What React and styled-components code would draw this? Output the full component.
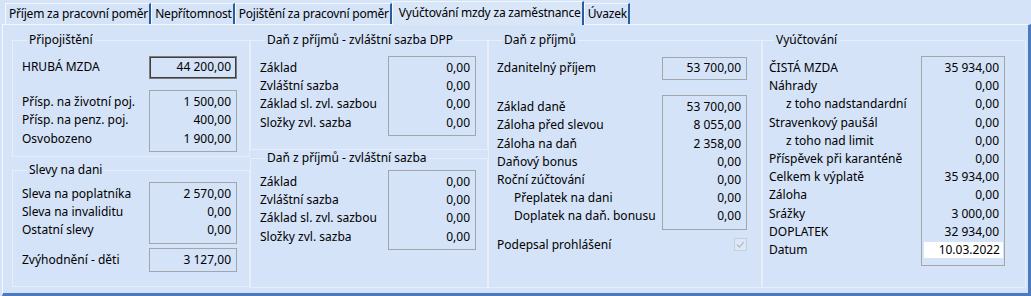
import React from 'react';
import styled, { createGlobalStyle } from 'styled-components';

const GlobalStyle = createGlobalStyle`
  body {
    margin: 0;
    background: #d4e3f8;
    font-family: "Noto Sans", "Open Sans", sans-serif;
    font-size: 12px;
    color: #000;
  }
`;

const Window = styled.div`
  width: 1031px;
  height: 296px;
  overflow: hidden;
  background: #d4e3f8;
`;

const TabStrip = styled.div`
  display: flex;
  align-items: flex-end;
  height: 24px;
  padding-left: 5px;
`;

const Tab = styled.div`
  height: ${(p) => (p.$active ? '24px' : '21px')};
  box-sizing: border-box;
  padding: 0 1px 0 ${(p) => (p.$active ? '6px' : '3px')};
  line-height: ${(p) => (p.$active ? '22px' : '19px')};
  letter-spacing: -0.2px;
  white-space: nowrap;
  border-top: 1px solid #f4f8fd;
  border-left: 1px solid #f4f8fd;
  border-right: 2px solid #2b5c9e;
  background: ${(p) => (p.$active ? '#d9e6f8' : '#d4e3f8')};
  margin-bottom: ${(p) => (p.$active ? '-1px' : '0')};
  position: relative;
  z-index: ${(p) => (p.$active ? 1 : 0)};
`;

const Panel = styled.div`
  margin-left: 2px;
  height: 272px;
  box-sizing: border-box;
  border-top: 1px solid #f4f8fd;
  border-left: 1px solid #f4f8fd;
  border-right: 3px solid #4a7bc2;
  border-bottom: 3px solid #4a7bc2;
  padding: 7px 2px 0 9px;
  display: grid;
  grid-template-columns: 238px 238px 274px 264px;
`;

const Column = styled.div`
  display: flex;
  flex-direction: column;
  gap: ${(p) => p.$gap || 0}px;
`;

const Group = styled.fieldset`
  margin: 0;
  min-width: 0;
  box-sizing: border-box;
  border: 1px solid #e8eef7;
  padding: ${(p) => p.$pad || '0 12px 0 9px'};
  height: ${(p) => p.$h}px;
  display: flex;
  flex-direction: column;
  gap: ${(p) => p.$gap || 0}px;
`;

const Legend = styled.legend`
  padding: 0 2px;
  margin-left: 5px;
  line-height: 16px;
`;

const Section = styled.div`
  display: flex;
  justify-content: space-between;
  align-items: flex-start;
  margin-top: ${(p) => p.$mt || 0}px;
`;

const Labels = styled.div`
  display: flex;
  flex-direction: column;
  padding-top: ${(p) => p.$pt ?? 3}px;
`;

const Label = styled.div`
  height: 18.2px;
  line-height: 18px;
  white-space: nowrap;
  padding-left: ${(p) => (p.$indent ? 17 : 0)}px;
`;

const ValueBox = styled.div`
  width: ${(p) => p.$w}px;
  box-sizing: border-box;
  border: 1px solid ${(p) => (p.$strong ? '#7c7c7c' : '#a2a6ab')};
  box-shadow: ${(p) => (p.$strong ? 'inset 0 0 0 1px #3e3e3e' : 'none')};
  padding: ${(p) => p.$pad || '2px 0 3px'};
  display: flex;
  flex-direction: column;
  text-align: right;
`;

const Value = styled.div`
  height: 18.2px;
  line-height: 18px;
  padding-right: ${(p) => p.$pr || 5}px;
  white-space: nowrap;
`;

const DateValue = styled.div`
  height: 16px;
  line-height: 16px;
  margin: 1px 1px 0 2px;
  padding-right: 3px;
  background: #fff;
`;

const CheckRow = styled.div`
  display: flex;
  justify-content: space-between;
  align-items: center;
  height: 18px;
  margin-top: 6px;
`;

const CheckBox = styled.div`
  width: 13px;
  height: 13px;
  box-sizing: border-box;
  border: 1px solid #c9cfd8;
  background: #dde8f7;
  display: flex;
  align-items: center;
  justify-content: center;
`;

const Check = () => (
  <svg width="9" height="9" viewBox="0 0 9 9">
    <path d="M1 4.5 L3.4 7 L8 1.8" fill="none" stroke="#b4b9c0" strokeWidth="1.2" />
  </svg>
);

const Block = ({ rows, w, strong, pad, mt, pt }) => (
  <Section $mt={mt}>
    <Labels $pt={pt}>
      {rows.map(([label, , indent]) => (
        <Label key={label} $indent={indent}>{label}</Label>
      ))}
    </Labels>
    <ValueBox $w={w} $strong={strong} $pad={pad}>
      {rows.map(([label, value]) =>
        label === 'Datum' ? (
          <DateValue key={label}>{value}</DateValue>
        ) : (
          <Value key={label}>{value}</Value>
        )
      )}
    </ValueBox>
  </Section>
);

const tabs = [
  'Příjem za pracovní poměr',
  'Nepřítomnost',
  'Pojištění za pracovní poměr',
  'Vyúčtování mzdy za zaměstnance',
  'Úvazek',
];

const zeroRows = [
  ['Základ', '0,00'],
  ['Zvláštní sazba', '0,00'],
  ['Základ sl. zvl. sazbou', '0,00'],
  ['Složky zvl. sazba', '0,00'],
];

export default function App() {
  return (
    <Window>
      <GlobalStyle />
      <TabStrip>
        {tabs.map((t) => (
          <Tab key={t} $active={t === 'Vyúčtování mzdy za zaměstnance'}>{t}</Tab>
        ))}
      </TabStrip>
      <Panel>
        <Column $gap={5}>
          <Group $h={125}>
            <Legend>Připojištění</Legend>
            <Block mt={8} w={88} strong pad="1px 0 2px" pt={2} rows={[['HRUBÁ MZDA', '44 200,00']]} />
            <Block mt={11} w={88} rows={[
              ['Přísp. na životní poj.', '1 500,00'],
              ['Přísp. na penz. poj.', '400,00'],
              ['Osvobozeno', '1 900,00'],
            ]} />
          </Group>
          <Group $h={125}>
            <Legend>Slevy na dani</Legend>
            <Block mt={4} w={88} rows={[
              ['Sleva na poplatníka', '2 570,00'],
              ['Sleva na invaliditu', '0,00'],
              ['Ostatní slevy', '0,00'],
            ]} />
            <Block mt={4} w={88} pad="2px 0 2px" pt={3} rows={[['Zvýhodnění - děti', '3 127,00']]} />
          </Group>
        </Column>
        <Column>
          <Group $h={118} $pad="0 11px 0 9px">
            <Legend>Daň z příjmů - zvláštní sazba DPP</Legend>
            <Block mt={8} w={88} rows={zeroRows} />
          </Group>
          <Group $h={138} $pad="0 11px 0 9px">
            <Legend>Daň z příjmů - zvláštní sazba</Legend>
            <Block mt={4} w={88} rows={zeroRows} />
          </Group>
        </Column>
        <Column>
          <Group $h={256} $pad="0 14px 0 8px">
            <Legend>Daň z příjmů</Legend>
            <Block mt={9} w={85} pad="1px 0 2px" pt={2} rows={[['Zdanitelný příjem', '53 700,00']]} />
            <Block mt={15} w={85} rows={[
              ['Základ daně', '53 700,00'],
              ['Záloha před slevou', '8 055,00'],
              ['Záloha na daň', '2 358,00'],
              ['Daňový bonus', '0,00'],
              ['Roční zúčtování', '0,00'],
              ['Přeplatek na dani', '0,00', true],
              ['Doplatek na daň. bonusu', '0,00', true],
            ]} />
            <CheckRow>
              <span>Podepsal prohlášení</span>
              <CheckBox><Check /></CheckBox>
            </CheckRow>
          </Group>
        </Column>
        <Column>
          <Group $h={256} $pad="0 20px 0 6px">
            <Legend>Vyúčtování</Legend>
            <Block mt={8} w={84} pad="2px 0 7px" pt={3} rows={[
              ['ČISTÁ MZDA', '35 934,00'],
              ['Náhrady', '0,00'],
              ['z toho nadstandardní', '0,00', true],
              ['Stravenkový paušál', '0,00'],
              ['z toho nad limit', '0,00', true],
              ['Příspěvek při karanténě', '0,00'],
              ['Celkem k výplatě', '35 934,00'],
              ['Záloha', '0,00'],
              ['Srážky', '3 000,00'],
              ['DOPLATEK', '32 934,00'],
              ['Datum', '10.03.2022'],
            ]} />
          </Group>
        </Column>
      </Panel>
    </Window>
  );
}
